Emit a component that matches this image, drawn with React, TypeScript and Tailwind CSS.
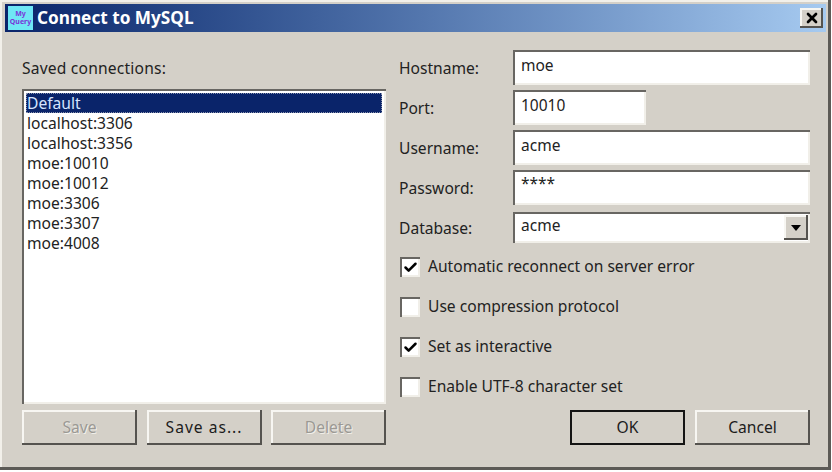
import { Check, X } from "lucide-react";

const font = "font-['Noto_Sans','Liberation_Sans',sans-serif]";
const sunken =
  "bg-white shadow-[inset_2px_2px_0_#686662,inset_-2px_-2px_0_#f1efe9]";
const raised =
  "bg-[#d4d0c8] shadow-[inset_-2px_-2px_0_#55534f,inset_2px_2px_0_#f7f6f2]";

const connections = [
  "localhost:3306",
  "localhost:3356",
  "moe:10010",
  "moe:10012",
  "moe:3306",
  "moe:3307",
  "moe:4008",
];

function Button({ label, disabled, primary, className }: { label: string; disabled?: boolean; primary?: boolean; className?: string }) {
  return (
    <button
      className={`h-[35px] w-[115px] text-[15.6px] ${raised} ${disabled ? "text-[#9b9994] [text-shadow:1px_1px_0_#f1efe9]" : "text-[#1c1c1c]"} ${primary ? "outline-2 -outline-offset-2 outline-[#141414]" : ""} ${className ?? ""}`}
    >
      {label}
    </button>
  );
}

function Field({ label, value, short, stars }: { label: string; value: string; short?: boolean; stars?: boolean }) {
  return (
    <div className="flex h-[40px] items-center">
      <span className="w-[114px] pt-[3px] text-[15.6px] text-[#222]">{label}</span>
      <div className={`mt-[1px] flex h-[35px] items-center px-[8px] text-[15.5px] text-[#222] ${stars ? "pb-[8px]" : "pb-[3px]"} ${sunken} ${short ? "w-[133px]" : "w-[297px]"}`}>
        {value}
      </div>
    </div>
  );
}

function CheckRow({ label, checked }: { label: string; checked?: boolean }) {
  return (
    <div className="flex h-[40px] items-center gap-[8px] pl-[1px] text-[15.6px] text-[#222]">
      <div className={`flex h-[20px] w-[20px] items-center justify-center ${sunken}`}>
        {checked && <Check size={15} strokeWidth={4} className="text-black" />}
      </div>
      {label}
    </div>
  );
}

export default function App() {
  return (
    <div className={`flex h-[472px] w-[832px] flex-col bg-white ${font}`}>
      <div className="flex h-[470px] w-[831px] flex-col bg-[#d4d0c8] pl-[5px] pr-[5px] pt-[4px] shadow-[inset_-3px_-3px_0_#5c5a56,inset_2px_2px_0_#f2f0ea]">
        <div className="flex h-[28px] w-[821px] shrink-0 items-center bg-gradient-to-r from-[#0a246a] to-[#a6caf0] pl-[3px] pr-[3px]">
          <div className="flex h-[24px] w-[25px] flex-col items-center justify-center bg-[#6fe7f5] text-[7px] font-bold leading-[8px] text-[#7a35d8]">
            <span>My</span>
            <span>Query</span>
          </div>
          <span className="ml-[4px] text-[17.2px] font-bold text-white">Connect to MySQL</span>
          <button className={`ml-auto flex h-[20px] w-[23px] items-center justify-center ${raised}`}>
            <X size={16} strokeWidth={4} className="text-black" />
          </button>
        </div>

        <div className="flex pl-[17px] pt-[15px]">
          <div className="flex w-[364px] flex-col">
            <div className="flex h-[42px] items-center pt-[2px] text-[15.6px] tracking-[0.2px] text-[#222]">Saved connections:</div>
            <div className={`h-[315px] px-[4px] py-[4px] text-[15.6px] leading-[20px] text-[#222] ${sunken}`}>
              <div className="bg-[#0a246a] pl-[1px] text-[#d5e4ff] outline-1 -outline-offset-1 outline-dotted outline-[#8a93ad]">Default</div>
              {connections.map((c) => (
                <div key={c} className="pl-[1px]">{c}</div>
              ))}
            </div>
            <div className="mt-[6px] flex justify-between">
              <Button label="Save" disabled />
              <Button label="Save as..." className="tracking-[1px]" />
              <Button label="Delete" disabled />
            </div>
          </div>

          <div className="ml-[13px] flex w-[411px] flex-col">
            <Field label="Hostname:" value="moe" />
            <Field label="Port:" value="10010" short />
            <Field label="Username:" value="acme" />
            <Field label="Password:" value="****" stars />
            <div className="flex h-[40px] items-center">
              <span className="w-[114px] pt-[3px] text-[15.6px] text-[#222]">Database:</span>
              <div className={`mt-[1px] flex h-[31px] w-[297px] items-center justify-between pl-[8px] pr-[2px] text-[15.5px] text-[#222] ${sunken}`}>
                <span className="pb-[3px]">acme</span>
                <div className={`flex h-[25px] w-[24px] items-center justify-center ${raised}`}>
                  <svg width="10" height="6" viewBox="0 0 10 6">
                    <path d="M0 0h10L5 6z" fill="#000" />
                  </svg>
                </div>
              </div>
            </div>
            <CheckRow label="Automatic reconnect on server error" checked />
            <CheckRow label="Use compression protocol" />
            <CheckRow label="Set as interactive" checked />
            <CheckRow label="Enable UTF-8 character set" />
            <div className="mt-[3px] flex justify-end gap-[10px]">
              <Button label="OK" primary />
              <Button label="Cancel" />
            </div>
          </div>
        </div>
      </div>
    </div>
  );
}
